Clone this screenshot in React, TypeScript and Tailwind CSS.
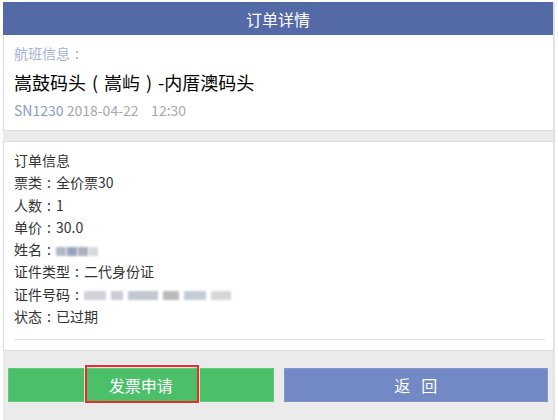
import React from 'react';

const font = { fontFamily: '"Noto Sans CJK SC", "Microsoft YaHei", sans-serif' };

const P = ({ c }: { c: string }) => <span className="inline-block w-[1em] text-center">{c}</span>;

const Blur = ({ widths, tone, gap }: { widths: number[]; tone: string[]; gap: number }) => (
  <span className="inline-flex items-center align-middle blur-[1.2px]" style={{ gap }}>
    {widths.map((w, i) => (
      <span key={i} className="inline-block h-[9px]" style={{ width: w, background: tone[i % tone.length] }} />
    ))}
  </span>
);

const OrderDetail = () => {
  const rows: [string, React.ReactNode][] = [
    ['票类', '全价票30'],
    ['人数', '1'],
    ['单价', '30.0'],
    ['姓名', <Blur gap={1} widths={[10, 10, 10, 9]} tone={['#b4b8c6', '#9aa3b8', '#aab0c0', '#d6d8de']} />],
    ['证件类型', '二代身份证'],
    ['证件号码', <Blur gap={5} widths={[22, 12, 30, 16, 22, 20]} tone={['#d0d2d8', '#c9ccd3', '#c3c7cf', '#bdb9bb', '#c6ccd6', '#d5d6da']} />],
    ['状态', '已过期'],
  ];

  return (
    <div className="w-[558px] h-[420px] bg-white overflow-hidden pt-[2px] pl-[3px]" style={font}>
      <div className="w-[552px] h-[418px] bg-[#ebebeb] border-r-2 border-[#e2e2e2] relative">
        {/* Header */}
        <div className="h-[33px] bg-[#536aa6] flex items-center justify-center text-white text-[16px]">
          订单详情
        </div>

        {/* Flight info */}
        <div className="h-[96px] bg-white border-l border-b border-[#dcdcdc] pl-[10px] pt-[7px]">
          <div className="text-[14px] leading-[22px] text-[#a5b1d9]">
            航班信息<P c=":" />
          </div>
          <div className="text-[18px] leading-[30px] mt-[3px] text-black">
            嵩鼓码头<P c="(" />嵩屿<P c=")" />-内厝澳码头
          </div>
          <div className="text-[14px] leading-[24px] mt-[1px] text-[#a8a8a8]">
            <span className="text-[#8d9ac6]">SN1230</span> 2018-04-22{'\u00a0\u00a0\u00a0\u00a0'}12:30
          </div>
        </div>

        {/* Order info */}
        <div className="mt-[10px] h-[210px] bg-white border border-r-0 border-[#dcdcdc] pl-[10px] pr-[8px] pt-[7px]">
          <div className="text-[14px] leading-[22.3px] text-[#333]">
            <div>订单信息</div>
            {rows.map(([k, v]) => (
              <div key={k}>
                {k}
                <P c=":" />
                {v}
              </div>
            ))}
          </div>
          <div className="mt-[12px] border-t border-[#e2e2e2]" />
        </div>

        {/* Buttons */}
        <div className="mt-[17px] px-[5px] flex gap-[10px]">
          <button className="w-[266px] h-[34px] bg-[#4cbf69] text-white text-[16px] border border-[#60c97a]">
            发票申请
          </button>
          <button className="w-[265px] h-[34px] bg-[#7289c6] text-white text-[16px] border border-[#8196cd] flex items-center justify-center gap-[11px]">
            <span>返</span>
            <span>回</span>
          </button>
        </div>

        {/* annotation */}
        <div className="absolute left-[82px] top-[363px] w-[114px] h-[38px] border-2 border-[#f02a2a] outline outline-1 outline-white/70" />
      </div>
    </div>
  );
};

export default function App() {
  return <OrderDetail />;
}
